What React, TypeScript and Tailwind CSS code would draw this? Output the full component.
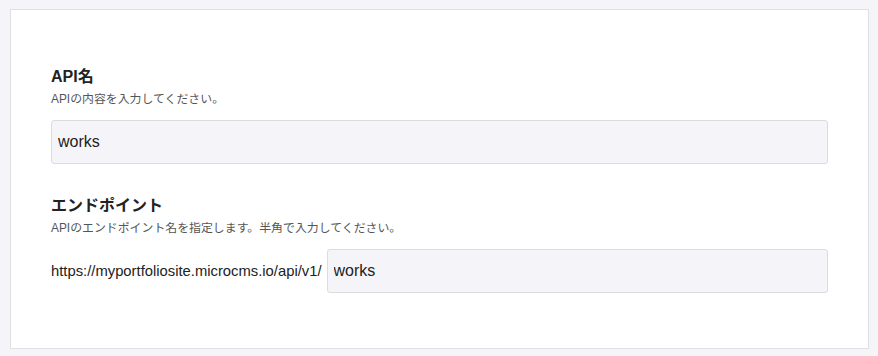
export default function App() {
  const font = { fontFamily: '"Liberation Sans", "Noto Sans CJK JP", sans-serif' };
  return (
    <div className="w-[878px] h-[356px] bg-[#f5f5f9] pt-[9px] pl-[10px]" style={font}>
      <div className="w-[859px] h-[340px] bg-white border border-[#e0e0e4] pl-[40px] pr-[40px] pt-[56px]">
        <div className="flex flex-col">
          <h2 className="text-[16px] leading-[22px] font-bold text-[#222]">API名</h2>
          <p className="text-[11.9px] leading-[16px] text-[#555] mt-[3px]">APIの内容を入力してください。</p>
          <input
            readOnly
            value="works"
            className="mt-[13px] h-[44px] w-full rounded-[3px] border border-[#dcdce0] bg-[#f5f5f9] px-[6px] text-[16px] text-[#222] outline-none"
          />
        </div>
        <div className="flex flex-col mt-[31px]">
          <h2 className="text-[16px] leading-[22px] font-bold text-[#222]">エンドポイント</h2>
          <p className="text-[11.9px] leading-[16px] text-[#555] mt-[3px]">APIのエンドポイント名を指定します。半角で入力してください。</p>
          <div className="mt-[13px] flex items-center">
            <span className="text-[14.8px] text-[#222] mr-[5px]">https://myportfoliosite.microcms.io/api/v1/</span>
            <input
              readOnly
              value="works"
              className="h-[44px] flex-1 rounded-[3px] border border-[#dcdce0] bg-[#f5f5f9] px-[6px] text-[16px] text-[#222] outline-none"
            />
          </div>
        </div>
      </div>
    </div>
  );
}
